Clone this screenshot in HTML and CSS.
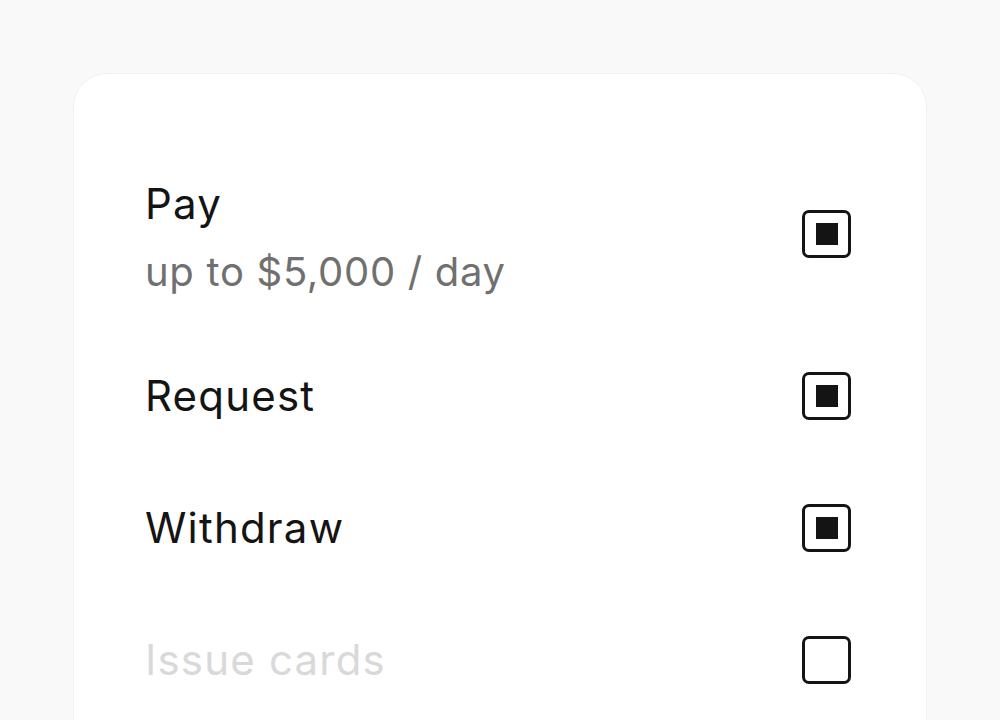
FILE: index.html
```html
<!DOCTYPE html>
<html lang="en">
<head>
    <meta charset="UTF-8">
    <meta name="viewport" content="width=device-width, initial-scale=1.0">
    <title>Permissions</title>
    <link rel="stylesheet" href="styles.css">
</head>
<body>
    <div class="card">
        <!-- Permission rows -->
        <div class="row first">
            <div class="label">
                <div class="title">Pay</div>
                <div class="sub">up to $5,000 / day</div>
            </div>
            <span class="check on"></span>
        </div>

        <div class="row">
            <div class="label">
                <div class="title">Request</div>
            </div>
            <span class="check on"></span>
        </div>

        <div class="row">
            <div class="label">
                <div class="title">Withdraw</div>
            </div>
            <span class="check on"></span>
        </div>

        <div class="row disabled">
            <div class="label">
                <div class="title">Issue cards</div>
            </div>
            <span class="check"></span>
        </div>
    </div>
</body>
</html>
```

FILE: styles.css
```css
body {
    margin: 0;
    font-family: Inter, "Liberation Sans", sans-serif;
    background: #f9f9f9;
    color: #141414;
    padding: 73px 73px 0 73px;
    height: 720px;
    box-sizing: border-box;
    overflow: hidden;
}

.card {
    background: #fff;
    border: 1px solid #f1f1f1;
    border-radius: 34px;
    padding: 56px 75px 0 71px;
    height: 800px;
}

.row {
    display: flex;
    align-items: center;
    justify-content: space-between;
    padding: 40px 0;
}

.row.first {
    padding: 48px 0 32px;
}

.row.first .check {
    margin-bottom: 8px;
}

.title {
    font-size: 42px;
    line-height: 52px;
    letter-spacing: 1.2px;
}

.sub {
    font-size: 40px;
    line-height: 52px;
    letter-spacing: 0.7px;
    margin-top: 16px;
    color: #707070;
}

.row.disabled .title {
    color: #d9d9d9;
}

.check {
    flex-shrink: 0;
    width: 49px;
    height: 48px;
    box-sizing: border-box;
    border: 3px solid #141414;
    border-radius: 7px;
    display: flex;
    align-items: center;
    justify-content: center;
}

.check.on::after {
    content: "";
    width: 22px;
    height: 22px;
    background: #141414;
}
```
